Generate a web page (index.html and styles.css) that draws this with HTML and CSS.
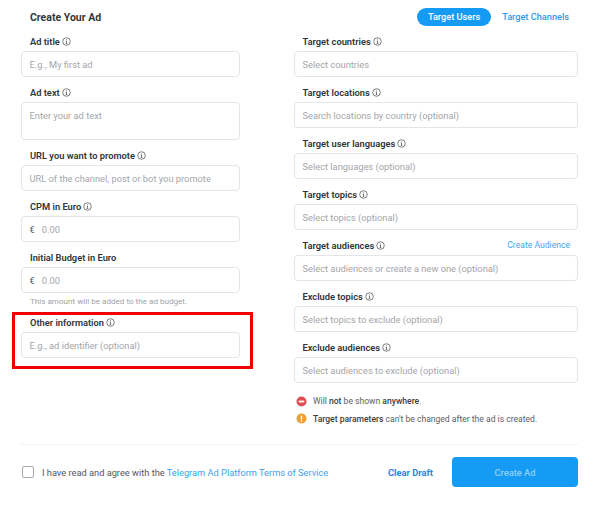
FILE: index.html
```html
<!DOCTYPE html>
<html lang="en">
<head>
<meta charset="utf-8">
<title>Create Your Ad</title>
<link rel="stylesheet" href="styles.css">
</head>
<body>
<svg class="defs" width="0" height="0" aria-hidden="true">
  <symbol id="info" viewBox="0 0 10 10">
    <circle cx="5" cy="5" r="4.2" fill="none" stroke="currentColor" stroke-width=".8"/>
    <path d="M5 2.7v.9M5 4.4v2.8M4.2 4.5H5M4.1 7.2h1.8" fill="none" stroke="currentColor" stroke-width=".8"/>
  </symbol>
</svg>
<main class="page">
  <header class="top">
    <h1 class="title">Create Your Ad</h1>
    <nav class="tabs">
      <a class="tab tab-active">Target Users</a>
      <a class="tab">Target Channels</a>
    </nav>
  </header>
  <div class="columns">
    <section class="col">
      <div class="field">
        <label class="label">Ad title <svg class="i"><use href="#info"/></svg></label>
        <div class="input">E.g., My first ad</div>
      </div>
      <div class="field">
        <label class="label">Ad text <svg class="i"><use href="#info"/></svg></label>
        <div class="input area">Enter your ad text</div>
      </div>
      <div class="field">
        <label class="label">URL you want to promote <svg class="i"><use href="#info"/></svg></label>
        <div class="input">URL of the channel, post or bot you promote</div>
      </div>
      <div class="field">
        <label class="label">CPM in Euro <svg class="i"><use href="#info"/></svg></label>
        <div class="input"><span class="cur">€</span>0.00</div>
      </div>
      <div class="field">
        <label class="label">Initial Budget in Euro</label>
        <div class="input"><span class="cur">€</span>0.00</div>
        <p class="note">This amount will be added to the ad budget.</p>
      </div>
      <div class="field other">
        <label class="label">Other information <svg class="i"><use href="#info"/></svg></label>
        <div class="input">E.g., ad identifier (optional)</div>
        <div class="mark"></div>
      </div>
    </section>
    <section class="col">
      <div class="field">
        <label class="label">Target countries <svg class="i"><use href="#info"/></svg></label>
        <div class="input">Select countries</div>
      </div>
      <div class="field">
        <label class="label">Target locations <svg class="i"><use href="#info"/></svg></label>
        <div class="input">Search locations by country (optional)</div>
      </div>
      <div class="field">
        <label class="label">Target user languages <svg class="i"><use href="#info"/></svg></label>
        <div class="input">Select languages (optional)</div>
      </div>
      <div class="field">
        <label class="label">Target topics <svg class="i"><use href="#info"/></svg></label>
        <div class="input">Select topics (optional)</div>
      </div>
      <div class="field">
        <div class="label-row">
          <label class="label">Target audiences <svg class="i"><use href="#info"/></svg></label>
          <a class="create">Create Audience</a>
        </div>
        <div class="input">Select audiences or create a new one (optional)</div>
      </div>
      <div class="field">
        <label class="label">Exclude topics <svg class="i"><use href="#info"/></svg></label>
        <div class="input">Select topics to exclude (optional)</div>
      </div>
      <div class="field">
        <label class="label">Exclude audiences <svg class="i"><use href="#info"/></svg></label>
        <div class="input">Select audiences to exclude (optional)</div>
      </div>
      <ul class="hints">
        <li class="hint">
          <svg class="hi" viewBox="0 0 12 12"><circle cx="6" cy="6" r="5.5" fill="#dc4f52"/><rect x="3" y="5" width="6" height="2" fill="#fff"/></svg>
          <span>Will <b>not</b> be shown <b>anywhere</b>.</span>
        </li>
        <li class="hint">
          <svg class="hi" viewBox="0 0 12 12"><circle cx="6" cy="6" r="5.5" fill="#f0a02f"/><rect x="5.2" y="2.6" width="1.6" height="4.4" rx=".6" fill="#fff"/><circle cx="6" cy="8.6" r=".9" fill="#fff"/></svg>
          <span><b>Target parameters</b> can't be changed after the ad is created.</span>
        </li>
      </ul>
    </section>
  </div>
  <footer class="foot">
    <label class="agree">
      <span class="box"></span>
      <span>I have read and agree with the <a class="link">Telegram Ad Platform Terms of Service</a></span>
    </label>
    <div class="actions">
      <a class="clear">Clear Draft</a>
      <button class="submit" type="button">Create Ad</button>
    </div>
  </footer>
</main>
</body>
</html>
```

FILE: styles.css
```css
* { box-sizing: border-box; }
html, body { margin: 0; padding: 0; }
body {
  background: #fff;
  width: 600px;
  height: 512px;
  overflow: hidden;
  font-family: Roboto, "Liberation Sans", sans-serif;
  font-size: 10px;
  color: #3a3d42;
}
.defs { position: absolute; }
.page { width: 600px; padding: 6px 22px 0 21px; }
.top { display: flex; justify-content: space-between; align-items: center; height: 21px; }
.title { margin: 1px 0 0 9px; font-size: 10.5px; font-weight: 700; color: #33363b; }
.tabs { display: flex; align-items: center; gap: 11.5px; margin: 0 9px 0 0; font-size: 9.2px; font-weight: 500; }
.tab { color: #2b9bf0; line-height: 18px; }
.tab-active { background: #169bf5; color: #fff; border-radius: 9px; padding: 0 10.5px; }
.columns { display: grid; grid-template-columns: 219px 284px; column-gap: 54px; }
.col { min-width: 0; }
.field { position: relative; }
.label-row { display: flex; justify-content: space-between; align-items: center; padding-right: 8px; }
.label {
  display: flex;
  align-items: center;
  gap: 2px;
  height: 24px;
  padding: 5px 0 0 9px;
  font-size: 9.3px;
  font-weight: 600;
  color: #303338;
}
.col + .col .label { padding-left: 8.5px; }
.i { width: 9px; height: 9px; color: #4a4d52; }
.create { font-size: 8.6px; color: #3ea5f2; padding-top: 4px; }
.input {
  height: 26px;
  border: 1px solid #e3e5e8;
  border-radius: 4px;
  padding: 0 7.5px 0;
  display: flex;
  align-items: center;
  font-size: 9.3px;
  color: #a3a6aa;
  background: #fff;
}
.field + .field { margin-top: 1px; }
.area { height: 38px; align-items: flex-start; padding-top: 6.5px; }
.cur { color: #55585c; margin-right: 7px; }
.note { margin: 3px 0 0 9px; font-size: 8.1px; line-height: 11px; color: #a0a3a7; height: 11px; }
.field.other { margin-top: 0; }
.other .label { height: 25px; padding-top: 6px; }
.mark {
  position: absolute;
  left: -9px;
  right: -13px;
  top: 5px;
  height: 57px;
  border: 3px solid #f00000;
  pointer-events: none;
}
.hints { list-style: none; margin: 9.5px 0 0 2px; padding: 0; }
.hint { display: flex; align-items: center; gap: 6px; height: 17.5px; font-size: 8.57px; color: #5b5e62; }
.hi { width: 11px; height: 11px; flex: none; }
.hint b { font-weight: 500; color: #3a3d42; }
.foot {
  border-top: 1px solid #f2f3f4;
  margin-top: 16.5px;
  padding-top: 12px;
  display: flex;
  justify-content: space-between;
  align-items: center;
}
.agree { display: flex; align-items: center; gap: 8px; font-size: 9.25px; color: #55585c; padding-left: 1px; }
.box { width: 12px; height: 12px; border: 1.3px solid #a9abae; border-radius: 2px; }
.link { color: #3c9fee; }
.actions { display: flex; align-items: center; gap: 19px; }
.clear { font-size: 9.3px; font-weight: 700; color: #2a86d8; }
.submit {
  width: 126px;
  height: 30px;
  border: 0;
  border-radius: 4px;
  background: #169bf5;
  color: #8fd0fa;
  font: 500 9.3px Roboto, "Liberation Sans", sans-serif;
}
```
